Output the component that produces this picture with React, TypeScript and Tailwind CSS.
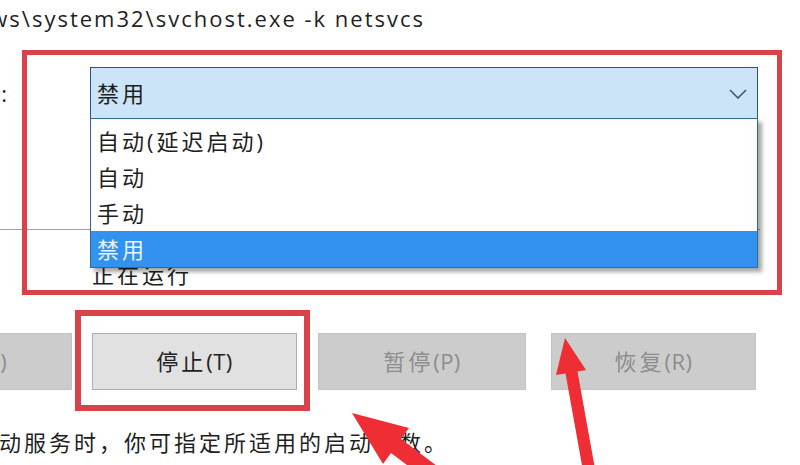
import React from 'react';

const FONT = "font-['Open_Sans','Noto_Sans_CJK_SC',sans-serif]";

const options = ['自动(延迟启动)', '自动', '手动', '禁用'];

// Dropdown list that hangs under the startup-type combobox
const DropdownList: React.FC<{ selected: string }> = ({ selected }) => (
  <div className="absolute -left-px -right-px top-[50px] z-20 border border-[#2f6a93] bg-white pt-[4px] shadow-[4px_4px_4px_rgba(0,0,0,0.35)]">
    {options.map((opt) => (
      <div
        key={opt}
        className={
          opt === selected
            ? 'h-[36px] pl-[6px] leading-[36px] bg-[#3392ef] text-[#eaf4ff]'
            : 'h-[36px] pl-[6px] leading-[36px] text-[#1e1e1e]'
        }
      >
        {opt}
      </div>
    ))}
  </div>
);

const Button: React.FC<{ label: string; disabled?: boolean; className?: string }> = ({
  label,
  disabled,
  className = '',
}) => {
  const cut = label.indexOf('(');
  return (
    <div
      className={
        (disabled
          ? 'bg-[#cccccc] border border-[#c4c4c4] text-[#8d8d8d] '
          : 'bg-[#e1e1e1] border border-[#adadad] text-[#222222] ') +
        'h-[57px] shrink-0 flex items-center justify-center ' +
        className
      }
    >
      <span>{label.slice(0, cut)}</span>
      <span className="tracking-[0.5px]">{label.slice(cut)}</span>
    </div>
  );
};

export default function App() {
  return (
    <div
      className={`relative w-[800px] h-[465px] overflow-hidden bg-white text-[22px] tracking-[3px] text-[#1f1f1f] ${FONT}`}
    >
      {/* command line path */}
      <div className="flex w-[425px] justify-end whitespace-nowrap h-[36px] leading-[36px] tracking-[2px]">
        C:\Windows\system32\svchost.exe -k netsvcs
      </div>

      {/* startup type row */}
      <div className="mt-[31px] flex items-start">
        <div className="flex w-[90px] justify-end whitespace-nowrap leading-[52px] pr-[80px]">启动类型(E):</div>
        <div className="relative w-[668px] h-[52px] border border-[#1f5d87] bg-[#cce4f7]">
          <div className="pl-[6px] leading-[50px] text-[#1e1e1e]">禁用</div>
          <svg
            className="absolute right-[10px] top-[21px]"
            width="18"
            height="10"
            viewBox="0 0 18 10"
            fill="none"
          >
            <path d="M1 1 L9 9 L17 1" stroke="#4b5560" strokeWidth="1.6" />
          </svg>
          <DropdownList selected="禁用" />
        </div>
      </div>

      {/* separator */}
      <div className="mt-[110px] h-px w-[760px] bg-[#a3a3a3]" />

      {/* service status, partly hidden under the open list */}
      <div className="mt-[29px] pl-[92px] h-[30px] leading-[30px] whitespace-nowrap">正在运行</div>

      {/* service control buttons */}
      <div className="mt-[44px] flex">
        <Button label="启动(S)" disabled className="w-[206px] ml-[-134px]" />
        <Button label="停止(T)" className="w-[205px] ml-[20px]" />
        <Button label="暂停(P)" disabled className="w-[208px] ml-[21px]" />
        <Button label="恢复(R)" disabled className="w-[205px] ml-[25px]" />
      </div>

      {/* hint text */}
      <div className="mt-[37px] ml-[-26px] h-[30px] leading-[30px] whitespace-nowrap text-[#1f1f1f]">
        启动服务时，你可指定所适用的启动参数。
      </div>

      {/* annotation boxes */}
      <div className="absolute left-[22px] top-[50px] w-[760px] h-[245px] border-[5px] border-[#d8434a] z-30 pointer-events-none" />
      <div className="absolute left-[75px] top-[310px] w-[235px] h-[101px] border-[6px] border-[#d8434a] z-30 pointer-events-none" />

      {/* annotation arrows */}
      <svg className="absolute left-0 top-0 z-40 pointer-events-none" width="800" height="465" viewBox="0 0 800 465">
        <polygon
          points="352,413 409,428 401,439 477,496 467,510 391,453 383,464"
          fill="#ee2e34"
        />
        <polygon
          points="565,338 586,370 577.5,371.5 597,480 585,482 565.5,373.5 556,375"
          fill="#ee2e34"
        />
      </svg>
    </div>
  );
}
